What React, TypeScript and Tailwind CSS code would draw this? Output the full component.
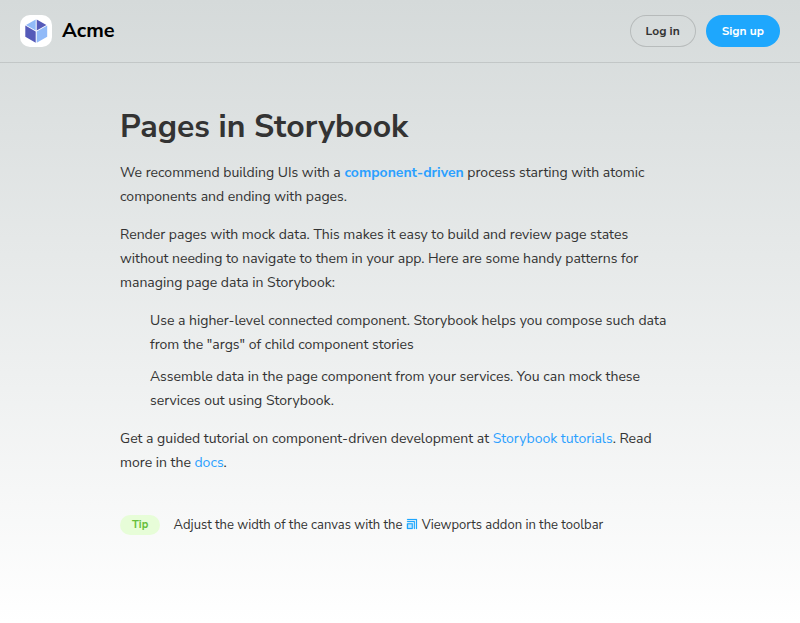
import React from "react";

function Logo() {
  return (
    <svg width="32" height="32" viewBox="0 0 32 32" className="inline-block align-top">
      <g fill="none" fillRule="evenodd">
        <path d="M10 0h12a10 10 0 0110 10v12a10 10 0 01-10 10H10A10 10 0 010 22V10A10 10 0 0110 0z" fill="#FFF" />
        <path d="M5.3 10.6l10.4 6v11.1l-10.4-6v-11zm11.4-6.2l9.7 5.5-9.7 5.6V4.4z" fill="#555AB9" />
        <path d="M27.2 10.6v11.2l-10.5 6V16.5l10.5-6zM15.7 4.4v11L6 10l9.7-5.5z" fill="#91BAF8" />
      </g>
    </svg>
  );
}

function ViewportIcon() {
  return (
    <svg viewBox="0 0 12 12" className="mt-[3px] mr-1 inline-block h-3 w-3 align-top">
      <rect x="1.5" y="5.7" width="4.8" height="4.8" fill="#bfe6ff" />
      <path
        d="M1.5 5.2h4.8c.3 0 .5.2.5.4v5.1c-.1.2-.3.3-.4.3H1.4a.5.5 0 01-.5-.4V5.7c0-.3.2-.5.5-.5zm0-2.1h6.9c.3 0 .5.2.5.4v7a.5.5 0 01-1 0V4H1.5a.5.5 0 010-1zm0-2.1h9c.3 0 .5.2.5.4v9.1a.5.5 0 01-1 0V2H1.5a.5.5 0 010-1zm4.3 5.2H2V10h3.8V6.2z"
        fill="#1ea7fd"
        stroke="#1ea7fd"
        strokeWidth="0.2"
      />
    </svg>
  );
}

function Header() {
  return (
    <header className="flex items-center justify-between border-b border-black/10 px-5 py-[15px]">
      <div className="flex">
        <Logo />
        <h1 className="ml-[10px] mt-[6px] text-[20px] leading-5 font-bold text-black">Acme</h1>
      </div>
      <div className="flex gap-[10px]">
        <button className="rounded-full px-4 py-[10px] text-[12px] leading-3 font-bold text-[#333] shadow-[inset_0_0_0_1px_rgba(0,0,0,0.15)]">
          Log in
        </button>
        <button className="rounded-full bg-[#1ea7fd] px-4 py-[10px] text-[12px] leading-3 font-bold text-white">
          Sign up
        </button>
      </div>
    </header>
  );
}

export default function App() {
  return (
    <div className="h-[623px] bg-white bg-linear-to-b from-[#d5dada] to-white font-['Nunito_Sans','Helvetica_Neue',Helvetica,Arial,sans-serif]">
      <Header />
      <main className="mx-auto max-w-[600px] px-5 py-12 text-[14px] leading-6 text-[#333]">
        <h2 className="mb-[18px] text-[32px] leading-8 font-bold">Pages in Storybook</h2>
        <p className="my-[14px]">
          We recommend building UIs with a <a className="font-bold text-[#2ba0ff]">component-driven</a> process
          starting with atomic components and ending with pages.
        </p>
        <p className="my-[14px]">
          Render pages with mock data. This makes it easy to build and review page states without needing to
          navigate to them in your app. Here are some handy patterns for managing page data in Storybook:
        </p>
        <ul className="my-[14px] pl-[30px]">
          <li className="mb-2">
            Use a higher-level connected component. Storybook helps you compose such data from the "args" of
            child component stories
          </li>
          <li className="mb-2">
            Assemble data in the page component from your services. You can mock these services out using
            Storybook.
          </li>
        </ul>
        <p className="my-[14px]">
          Get a guided tutorial on component-driven development at{" "}
          <a className="text-[#2ba0ff]">Storybook tutorials</a>. Read more in the{" "}
          <a className="text-[#2ba0ff]">docs</a>.
        </p>
        <div className="my-10 text-[13px] leading-5">
          <span className="mr-[10px] inline-block rounded-full bg-[#e7fdd8] px-3 py-1 align-top text-[11px] leading-3 font-bold text-[#66bf3c]">
            Tip
          </span>{" "}
          Adjust the width of the canvas with the{" "}
          <ViewportIcon />
          Viewports addon in the toolbar
        </div>
      </main>
    </div>
  );
}
